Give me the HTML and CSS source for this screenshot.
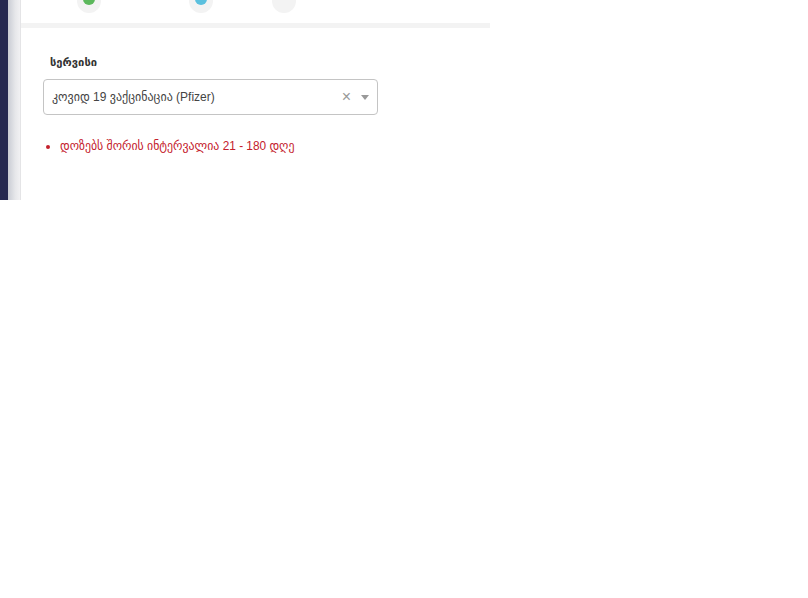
FILE: index.html
```html
<!DOCTYPE html>
<html lang="ka">
<head>
<meta charset="utf-8">
<title>სერვისი</title>
<link rel="stylesheet" href="styles.css">
</head>
<body>
<div class="shell">
  <div class="rail"></div>
  <div class="shade"></div>
  <main class="panel">
    <div class="steps">
      <div class="step step-a"><span class="dot dot-green"></span></div>
      <div class="step step-b"><span class="dot dot-blue"></span></div>
      <div class="step step-c"></div>
    </div>
    <div class="divider"></div>
    <section class="form">
      <label class="label">სერვისი</label>
      <div class="select">
        <span class="value">კოვიდ 19 ვაქცინაცია (Pfizer)</span>
        <span class="clear">×</span>
        <span class="arrow"></span>
      </div>
      <ul class="notes">
        <li>დოზებს შორის ინტერვალია 21 - 180 დღე</li>
      </ul>
    </section>
  </main>
</div>
</body>
</html>
```
FILE: styles.css
```css
html, body {
  margin: 0;
  padding: 0;
  background: #fff;
}
body {
  font-family: "Liberation Sans", "DejaVu Sans", sans-serif;
}
.shell {
  display: flex;
  height: 200px;
  overflow: hidden;
}
.rail {
  width: 8px;
  background: #252850;
}
.shade {
  width: 13px;
  background: linear-gradient(to right, #c9ccd4, #e6e7ea 60%, #f1f1f3);
  border-right: 1px solid #e4e4e6;
  box-sizing: border-box;
}
.panel {
  width: 469px;
  background: #fff;
}
.steps {
  display: flex;
  align-items: flex-end;
  height: 23px;
}
.step {
  width: 24px;
  height: 36px;
  flex: none;
  margin-bottom: 10px;
  border-radius: 12px;
  background: #f3f3f3;
  display: flex;
  justify-content: center;
  align-items: flex-end;
  box-sizing: border-box;
  padding-bottom: 8px;
}
.step-a { margin-left: 56px; }
.step-b { margin-left: 88px; }
.step-c { margin-left: 59px; }
.dot {
  width: 12px;
  height: 12px;
  border-radius: 50%;
}
.dot-green { background: #5cb85c; }
.dot-blue { background: #5bc0de; }
.divider {
  height: 5px;
  background: #f3f3f3;
}
.form {
  padding: 26px 0 0 22px;
}
.label {
  display: block;
  margin-left: 7px;
  font-size: 11.2px;
  line-height: 16px;
  font-weight: 700;
  color: #333;
}
.select {
  display: flex;
  align-items: center;
  width: 335px;
  height: 36px;
  margin-top: 9px;
  box-sizing: border-box;
  padding: 0 8px;
  border: 1px solid #c4c4c4;
  border-radius: 4px;
  background: #fff;
}
.value {
  flex: 1;
  font-size: 12px;
  color: #444;
  white-space: nowrap;
}
.clear {
  font-size: 16px;
  line-height: 16px;
  color: #999;
  margin-right: 10px;
}
.arrow {
  width: 0;
  height: 0;
  border-left: 4px solid transparent;
  border-right: 4px solid transparent;
  border-top: 5px solid #999;
}
.notes {
  margin: 21px 0 0;
  padding: 0 0 0 17px;
  font-size: 11.85px;
  line-height: 20px;
  color: #c4202c;
}
```
